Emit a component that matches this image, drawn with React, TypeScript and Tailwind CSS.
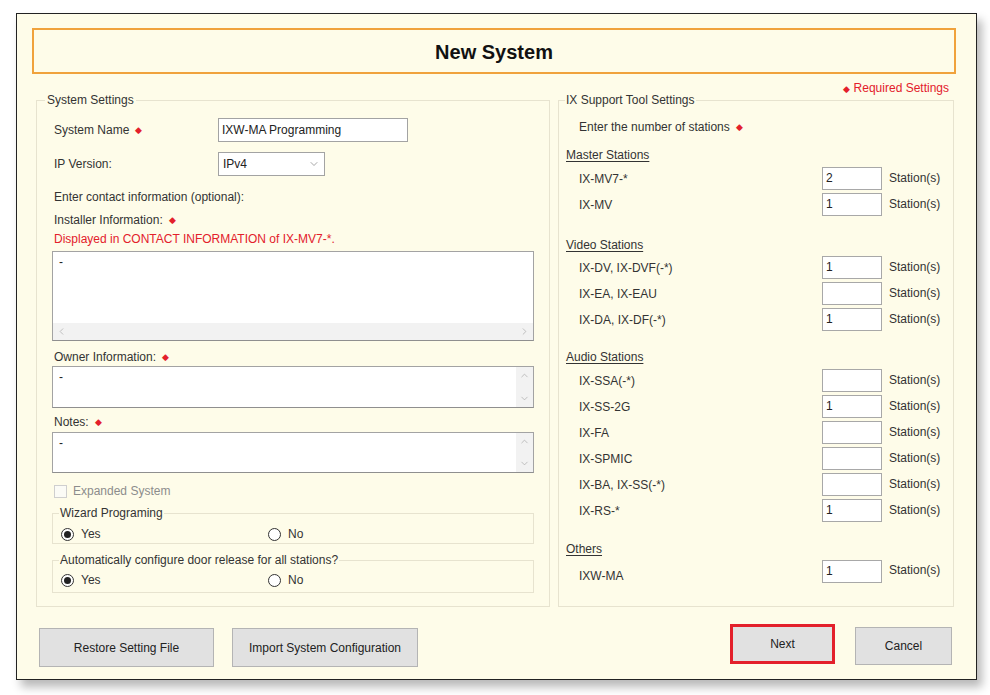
import { ChevronDown, ChevronUp, ChevronLeft, ChevronRight } from "lucide-react";

function Req() {
  return <span className="ml-[6px] inline-block translate-y-[-1px] text-[9px] leading-none text-[#e3202b]">◆</span>;
}

function Radio({ checked, label }: { checked?: boolean; label: string }) {
  return (
    <span className="flex items-center">
      <span className="flex h-[13px] w-[13px] items-center justify-center rounded-full border border-[#333] bg-white">
        {checked && <span className="h-[7px] w-[7px] rounded-full bg-[#222]" />}
      </span>
      <span className="ml-[7px]">{label}</span>
    </span>
  );
}

function StationRow({ name, value, className = "mt-[3px]" }: { name: string; value?: string; className?: string }) {
  return (
    <div className={`flex h-[23px] items-center ${className}`}>
      <span className="w-[256px] pl-[13px]">{name}</span>
      <div className="h-[23px] w-[60px] border border-[#a8a8a8] bg-white px-[3px] leading-[21px] text-[#222]">{value}</div>
      <span className="ml-[7px] -translate-y-[1px]">Station(s)</span>
    </div>
  );
}

function Section({ title, className }: { title: string; className: string }) {
  return <div className={`h-[16px] leading-[16px] underline underline-offset-2 ${className}`}>{title}</div>;
}

function VTextBox({ className }: { className: string }) {
  return (
    <div className={`flex border border-[#a3a3a3] border-b-[#8f8f8f] bg-white ${className}`}>
      <div className="flex-1 px-[6px] pt-[2px] leading-[16px] text-[#222]">-</div>
      <div className="flex w-[17px] flex-col items-center justify-between bg-[#f2f2f2] py-[3px] text-[#a8a8a8]">
        <ChevronUp size={11} strokeWidth={1.5} />
        <ChevronDown size={11} strokeWidth={1.5} />
      </div>
    </div>
  );
}

export default function App() {
  return (
    <div className="min-h-[695px] bg-white pl-[16px] pt-[13px] font-['Liberation_Sans',Arial,sans-serif] text-[12px] text-[#333]">
      <div className="flex h-[667px] w-[961px] flex-col border border-[#222] bg-[#fefce9] shadow-[5px_7px_9px_rgba(0,0,0,0.28)]">
        {/* title */}
        <div className="ml-[15px] mt-[14px] flex h-[46px] w-[924px] items-center justify-center border-2 border-[#f0a23c] pt-[2px]">
          <h1 className="text-[20px] font-bold text-[#111]">New System</h1>
        </div>

        <div className="mr-[27px] mt-[8px] h-[12px] self-end leading-[12px] text-[#e3202b]">
          <span className="mr-[4px] text-[9px]">◆</span>Required Settings
        </div>

        <div className="ml-[19px] flex gap-[8px]">
          {/* System settings */}
          <fieldset className="h-[513px] w-[514px] border border-[#e7e3cf] pl-[8px]">
            <legend className="px-[2px] leading-[12px]">System Settings</legend>
            <div className="flex flex-col pl-[7px] pr-[15px]">
              <div className="mt-[12px] flex h-[24px] items-center">
                <span className="w-[166px] pl-[2px]">
                  System Name
                  <Req />
                </span>
                <div className="h-[24px] w-[190px] border border-[#a3a3a3] bg-white px-[3px] leading-[22px] text-[#222]">
                  IXW-MA Programming
                </div>
              </div>
              <div className="mt-[10px] flex h-[24px] items-center">
                <span className="w-[166px] pl-[2px]">IP Version:</span>
                <div className="flex h-[24px] w-[107px] items-center justify-between border border-[#a3a3a3] bg-white pl-[4px] pr-[4px] text-[#222]">
                  <span>IPv4</span>
                  <ChevronDown size={12} strokeWidth={1.3} className="text-[#777]" />
                </div>
              </div>
              <div className="mt-[13px] h-[16px] pl-[2px] leading-[16px]">Enter contact information (optional):</div>
              <div className="mt-[7px] h-[16px] pl-[2px] leading-[16px]">
                Installer Information:
                <Req />
              </div>
              <div className="mt-[3px] h-[16px] pl-[2px] leading-[16px] text-[#e3202b]">
                Displayed in CONTACT INFORMATION of IX-MV7-*.
              </div>
              <div className="mt-[4px] flex h-[90px] flex-col border border-[#a3a3a3] border-b-[#8f8f8f] bg-white">
                <div className="flex-1 px-[6px] pt-[2px] leading-[16px] text-[#222]">-</div>
                <div className="flex h-[17px] items-center justify-between bg-[#f2f2f2] px-[3px] text-[#a8a8a8]">
                  <ChevronLeft size={11} strokeWidth={1.5} />
                  <ChevronRight size={11} strokeWidth={1.5} />
                </div>
              </div>
              <div className="mt-[8px] h-[16px] pl-[2px] leading-[16px]">
                Owner Information:
                <Req />
              </div>
              <VTextBox className="mt-[1px] h-[42px]" />
              <div className="mt-[6px] h-[16px] pl-[2px] leading-[16px]">
                Notes:
                <Req />
              </div>
              <VTextBox className="mt-[2px] h-[41px]" />
              <div className="mt-[10px] flex h-[16px] items-center pl-[2px] text-[#8c8c8c]">
                <span className="h-[13px] w-[13px] border border-[#cfcfcf] bg-[#fbfbf6]" />
                <span className="ml-[6px]">Expanded System</span>
              </div>

              <fieldset className="mt-[7px] border border-[#e7e3cf] pl-[6px]">
                <legend className="px-[1px] leading-[14px]">Wizard Programing</legend>
                <div className="mb-[1px] mt-[6px] flex h-[16px] items-center pl-[2px]">
                  <span className="w-[207px]">
                    <Radio checked label="Yes" />
                  </span>
                  <Radio label="No" />
                </div>
              </fieldset>

              <fieldset className="mt-[9px] border border-[#e7e3cf] pl-[6px]">
                <legend className="px-[1px] leading-[14px]">Automatically configure door release for all stations?</legend>
                <div className="mb-[4px] mt-[5px] flex h-[16px] items-center pl-[2px]">
                  <span className="w-[207px]">
                    <Radio checked label="Yes" />
                  </span>
                  <Radio label="No" />
                </div>
              </fieldset>
            </div>
          </fieldset>

          {/* IX Support Tool settings */}
          <fieldset className="h-[513px] w-[396px] border border-[#e7e3cf] pl-[6px]">
            <legend className="px-[1px] leading-[12px]">IX Support Tool Settings</legend>
            <div className="flex flex-col pl-[1px]">
              <div className="mt-[13px] h-[16px] pl-[13px] leading-[16px]">
                Enter the number of stations
                <Req />
              </div>
              <Section title="Master Stations" className="mt-[12px]" />
              <StationRow name="IX-MV7-*" value="2" className="mt-[4px]" />
              <StationRow name="IX-MV" value="1" />

              <Section title="Video Stations" className="mt-[21px]" />
              <StationRow name="IX-DV, IX-DVF(-*)" value="1" />
              <StationRow name="IX-EA, IX-EAU" />
              <StationRow name="IX-DA, IX-DF(-*)" value="1" />

              <Section title="Audio Stations" className="mt-[18px]" />
              <StationRow name="IX-SSA(-*)" className="mt-[4px]" />
              <StationRow name="IX-SS-2G" value="1" />
              <StationRow name="IX-FA" />
              <StationRow name="IX-SPMIC" />
              <StationRow name="IX-BA, IX-SS(-*)" />
              <StationRow name="IX-RS-*" value="1" />

              <Section title="Others" className="mt-[19px]" />
              <div className="mt-[3px] flex h-[23px] items-start">
                <span className="mt-[7px] w-[256px] pl-[13px]">IXW-MA</span>
                <div className="h-[23px] w-[60px] border border-[#a8a8a8] bg-white px-[3px] leading-[21px] text-[#222]">1</div>
                <span className="ml-[7px] mt-[1px]">Station(s)</span>
              </div>
            </div>
          </fieldset>
        </div>

        {/* buttons */}
        <div className="flex items-start pl-[22px] pr-[24px]">
          <button className="mt-[21px] h-[39px] w-[175px] border border-[#b4b4b4] bg-[#e1e1e1] text-[#222]">
            Restore Setting File
          </button>
          <button className="ml-[18px] mt-[21px] h-[39px] w-[186px] border border-[#b4b4b4] bg-[#e1e1e1] text-[#222]">
            Import System Configuration
          </button>
          <div className="ml-auto mt-[17px] h-[40px] w-[105px] border-[3px] border-[#e3202b] bg-[#e1e1e1]">
            <button className="h-full w-full text-[#222]">Next</button>
          </div>
          <button className="ml-[20px] mt-[20px] h-[38px] w-[97px] border border-[#b4b4b4] bg-[#e1e1e1] text-[#222]">
            Cancel
          </button>
        </div>
      </div>
    </div>
  );
}
